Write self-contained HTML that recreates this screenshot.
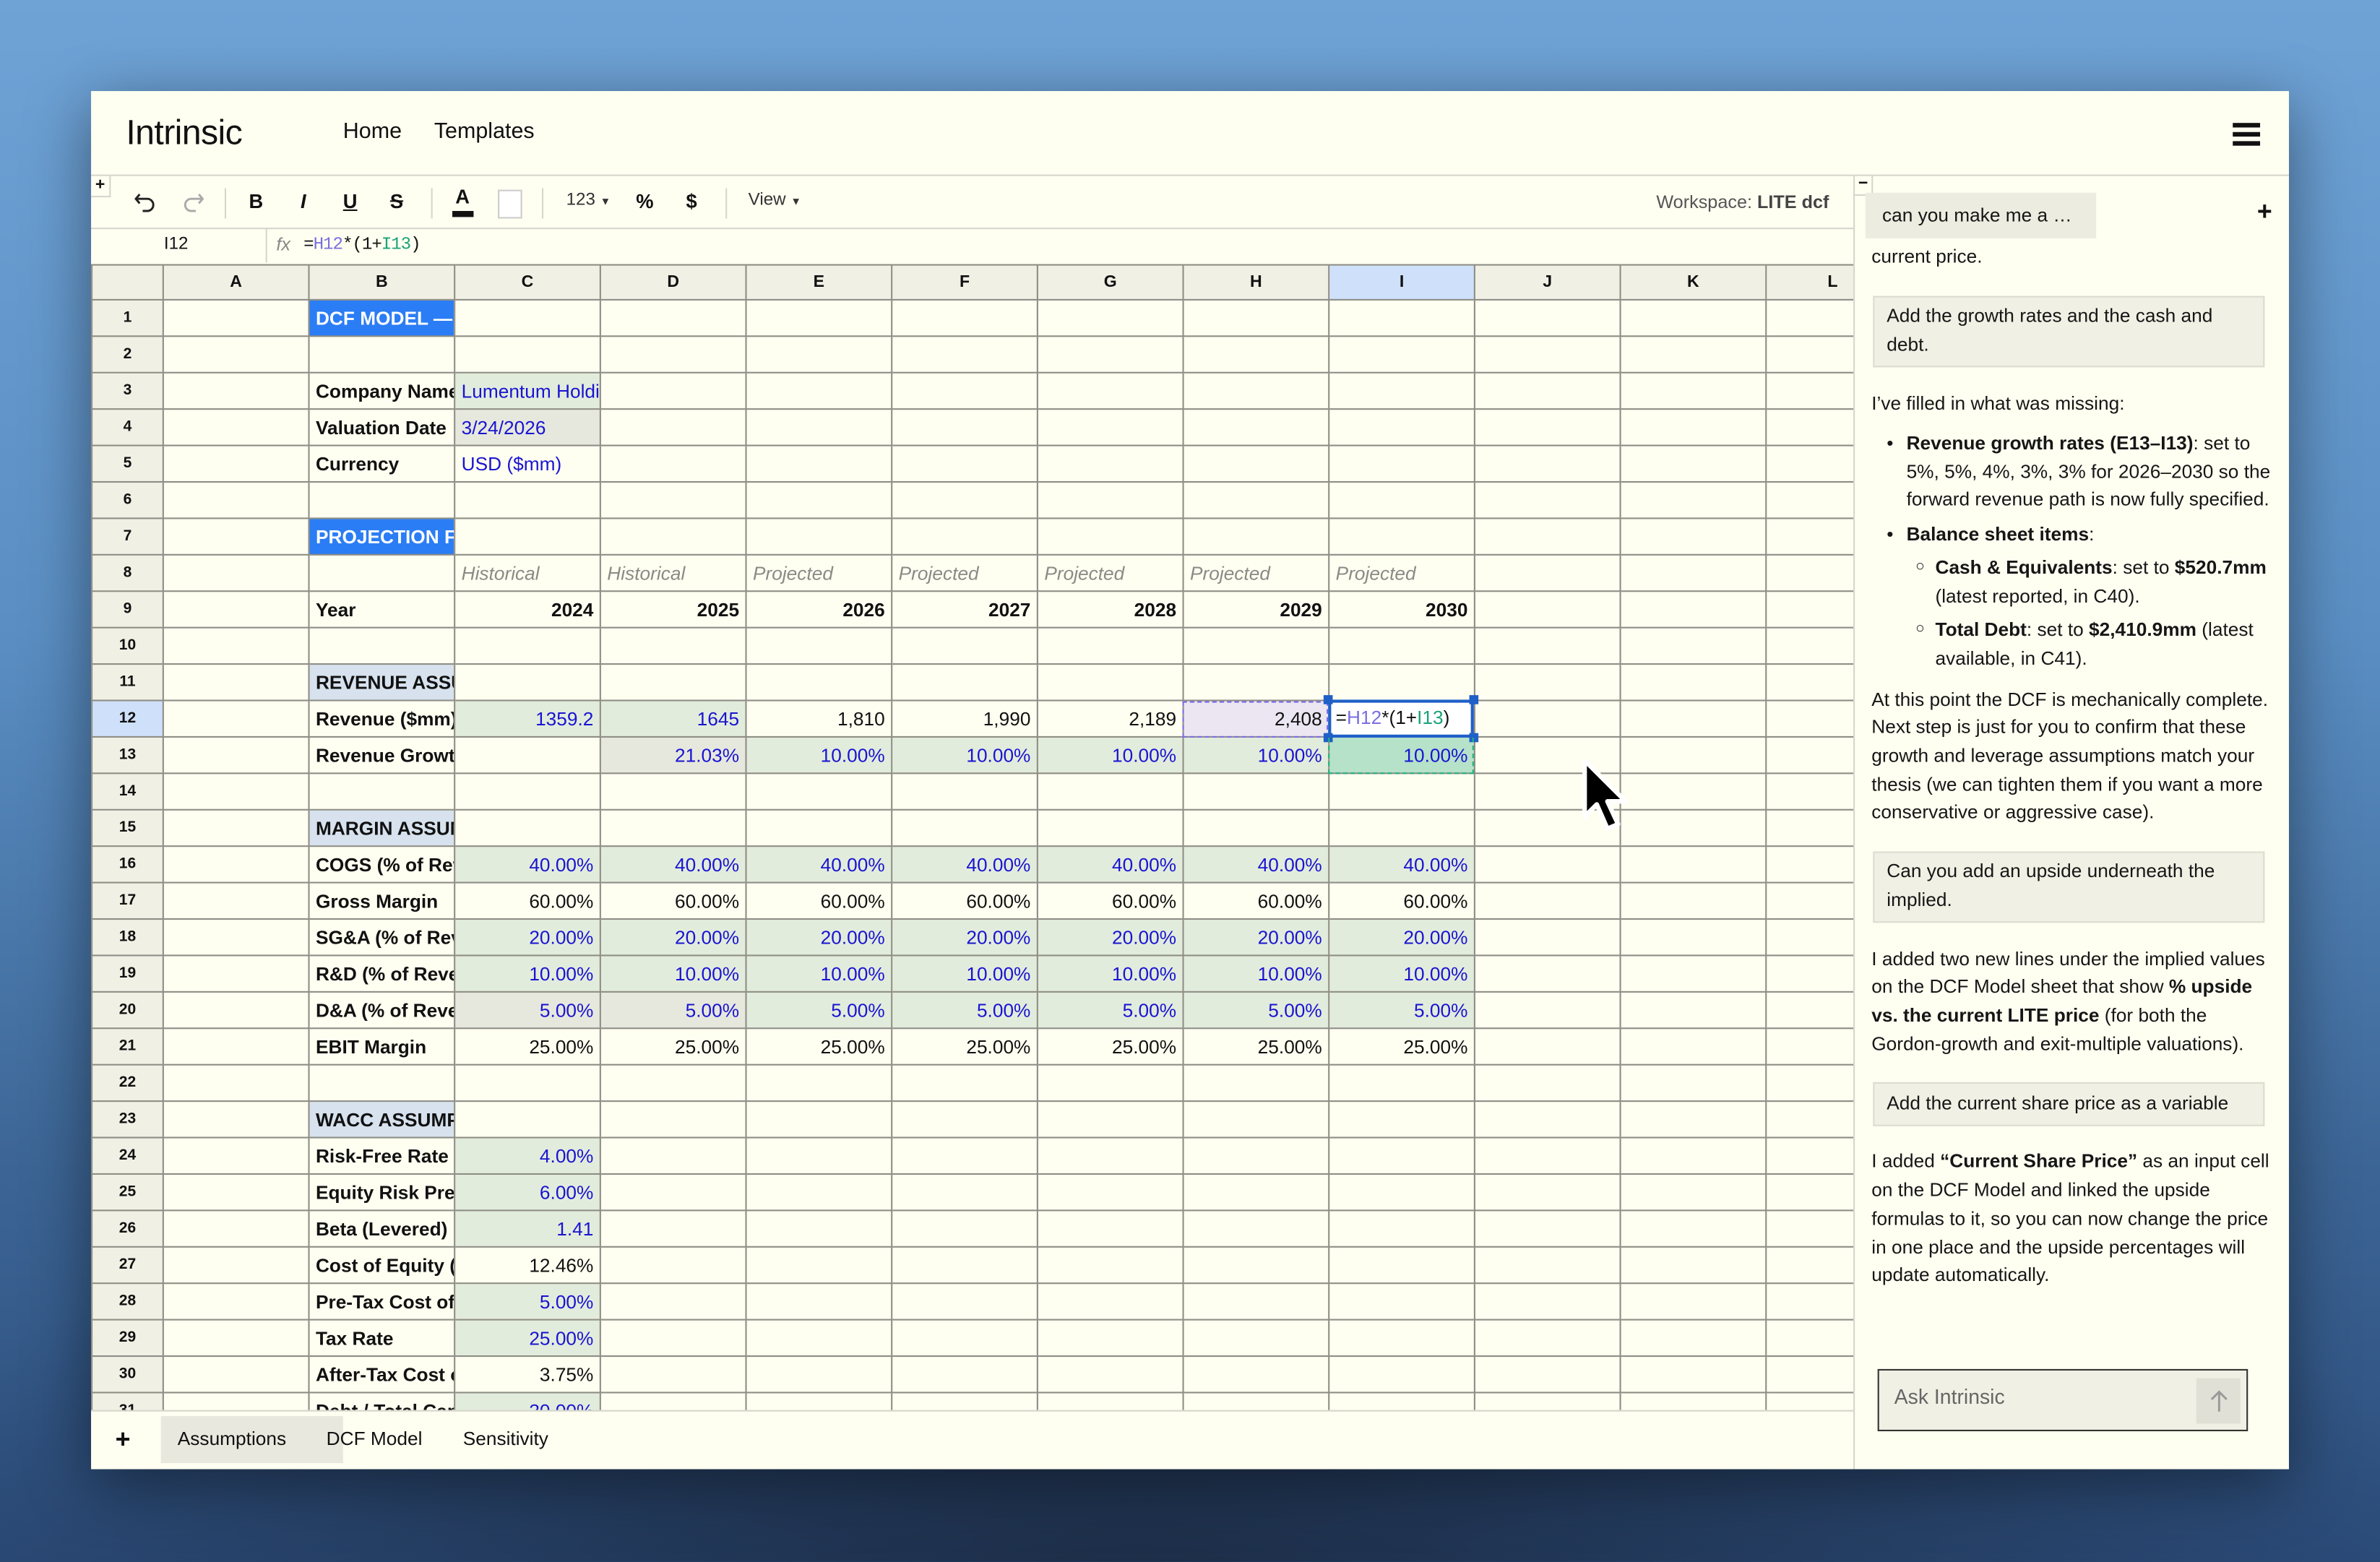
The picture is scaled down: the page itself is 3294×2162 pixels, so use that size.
<!DOCTYPE html>
<html><head><meta charset="utf-8">
<style>
html,body{margin:0;padding:0;width:3294px;height:2160px;overflow:hidden;}
body{background:#2a4a72;}
#root{position:absolute;left:0;top:0;width:1568px;height:1029px;transform:scale(2.10077);transform-origin:0 0;
 background:
  radial-gradient(ellipse 900px 300px at 750px 1050px, #1c2c45 0%, rgba(28,44,69,0) 100%),
  linear-gradient(180deg,#6fa3d6 0%,#5b8fc4 40%,#3c6595 75%,#2c4d7c 100%);
 font-family:"Liberation Sans",Arial,sans-serif;color:#111;overflow:hidden;}
#win{position:absolute;left:60px;top:60px;width:1448px;height:908px;background:#fefff1;box-shadow:0 10px 40px rgba(0,0,0,.45);overflow:hidden;}
.a{position:absolute;white-space:nowrap;}
.hl{position:absolute;background:#d6d6cc;}
table{border-collapse:collapse;table-layout:fixed;position:absolute;left:0;top:114px;width:1199px;}
tr{height:24px;}
td{border:1px solid #8e8e86;height:24px;padding:0 4px;font-size:12.5px;white-space:nowrap;overflow:hidden;box-sizing:border-box;line-height:22px;}
tr.h{height:23px;}
tr.h td{background:#f1f0e5;font-weight:bold;font-size:11px;text-align:center;height:23px;}
td.rh{background:#f1f0e5;font-weight:bold;font-size:10px;text-align:center;padding:0;}
.b{font-weight:bold;}
.r{text-align:right;}
.bl{color:#1a14d2;}
.g{background:#e2ecdc;}
.gy{background:#e6e8dd;}
.hd{background:#2b7df5;color:#fff;font-weight:bold;}
.sc{background:#d7e2ee;font-weight:bold;}
.it{font-style:italic;color:#8a8a86;}
.chat{font-size:12.5px;line-height:18px;color:#161616;}
.box{position:absolute;background:#f0f0e4;border:1px solid #dcdcd0;}
</style></head><body>
<div id="root">
<div id="win">
 <div class="a" style="left:23px;top:14px;font-size:23px;letter-spacing:-0.3px;">Intrinsic</div>
 <div class="a" style="left:166px;top:19px;font-size:14.5px;">Home</div>
 <div class="a" style="left:226px;top:19px;font-size:14.5px;">Templates</div>
 <div class="a" style="left:1411px;top:21px;width:18px;height:3px;background:#111;box-shadow:0 6px 0 #111,0 12px 0 #111;"></div>
 <div class="hl" style="left:0;top:55px;width:1448px;height:1px;"></div>
 <div class="a" style="left:0;top:56px;width:12px;height:13px;border:1px solid #d6d6cc;border-left:none;border-top:none;font-size:11px;font-weight:bold;text-align:center;line-height:12px;">+</div>
 <svg class="a" style="left:28px;top:66px" width="16" height="14" viewBox="0 0 16 14"><path d="M4 2 L1.5 5 L4 8 M1.5 5 H9 A4 4 0 0 1 9 13 H6" fill="none" stroke="#222" stroke-width="1.4"/></svg>
 <svg class="a" style="left:59px;top:66px" width="16" height="14" viewBox="0 0 16 14"><path d="M12 2 L14.5 5 L12 8 M14.5 5 H7 A4 4 0 0 0 7 13 H10" fill="none" stroke="#aaa" stroke-width="1.4"/></svg>
 <div class="hl" style="left:88px;top:64px;width:1px;height:20px;"></div>
 <div class="a b" style="left:104px;top:65px;font-size:13px;">B</div>
 <div class="a" style="left:138px;top:65px;font-size:13px;font-style:italic;font-weight:bold;">I</div>
 <div class="a" style="left:166px;top:65px;font-size:13px;font-weight:bold;text-decoration:underline;">U</div>
 <div class="a" style="left:197px;top:65px;font-size:13px;font-weight:bold;text-decoration:line-through;">S</div>
 <div class="hl" style="left:224px;top:64px;width:1px;height:20px;"></div>
 <div class="a b" style="left:240px;top:62px;font-size:13px;">A</div>
 <div class="a" style="left:238px;top:79px;width:14px;height:4px;background:#111;"></div>
 <div class="a" style="left:268px;top:65px;width:14px;height:17px;border:1px solid #ccc;background:#fff;"></div>
 <div class="hl" style="left:297px;top:64px;width:1px;height:20px;"></div>
 <div class="a" style="left:313px;top:66px;font-size:11.5px;color:#333;">123 <span style="font-size:7px">▼</span></div>
 <div class="a b" style="left:359px;top:65px;font-size:13px;">%</div>
 <div class="a b" style="left:392px;top:65px;font-size:13px;">$</div>
 <div class="hl" style="left:418px;top:64px;width:1px;height:20px;"></div>
 <div class="a" style="left:433px;top:66px;font-size:11.5px;color:#333;">View <span style="font-size:7px">▼</span></div>
 <div class="a" style="right:303px;top:66px;font-size:12px;color:#555;">Workspace: <b style="color:#444">LITE dcf</b></div>
 <div class="hl" style="left:0;top:90px;width:1161px;height:1px;"></div>
 <div class="a" style="left:48px;top:95px;font-size:11.5px;">I12</div>
 <div class="hl" style="left:115px;top:90px;width:1px;height:23px;"></div>
 <div class="a" style="left:122px;top:94px;font-size:12px;font-style:italic;color:#888;">fx</div>
 <div class="a" style="left:140px;top:95px;font-size:11.5px;font-family:'Liberation Mono',monospace;letter-spacing:-0.5px;">=<span style="color:#7a6fe0">H12</span>*(1+<span style="color:#1aa37a">I13</span>)</div>
 <div class="a" style="left:0;top:0;width:1161px;height:869px;overflow:hidden;">
 <table>
 <colgroup><col style="width:47px"><col style="width:96px"><col style="width:96px"><col style="width:96px"><col style="width:96px"><col style="width:96px"><col style="width:96px"><col style="width:96px"><col style="width:96px"><col style="width:96px"><col style="width:96px"><col style="width:96px"><col style="width:96px"></colgroup>
 <tr class="h"><td></td><td>A</td><td>B</td><td>C</td><td>D</td><td>E</td><td>F</td><td>G</td><td>H</td><td style="background:#cfe0fa">I</td><td>J</td><td>K</td><td style="text-align:left;padding-left:40px">L</td></tr>
 <tr><td class="rh">1</td><td></td><td class="hd">DCF MODEL —</td><td></td><td></td><td></td><td></td><td></td><td></td><td></td><td></td><td></td><td></td></tr>
 <tr><td class="rh">2</td><td></td><td></td><td></td><td></td><td></td><td></td><td></td><td></td><td></td><td></td><td></td><td></td></tr>
 <tr><td class="rh">3</td><td></td><td class="b">Company Name</td><td class="g bl">Lumentum Holdings</td><td></td><td></td><td></td><td></td><td></td><td></td><td></td><td></td><td></td></tr>
 <tr><td class="rh">4</td><td></td><td class="b">Valuation Date</td><td class="gy bl">3/24/2026</td><td></td><td></td><td></td><td></td><td></td><td></td><td></td><td></td><td></td></tr>
 <tr><td class="rh">5</td><td></td><td class="b">Currency</td><td class="bl">USD ($mm)</td><td></td><td></td><td></td><td></td><td></td><td></td><td></td><td></td><td></td></tr>
 <tr><td class="rh">6</td><td></td><td></td><td></td><td></td><td></td><td></td><td></td><td></td><td></td><td></td><td></td><td></td></tr>
 <tr><td class="rh">7</td><td></td><td class="hd">PROJECTION FRAMEWORK</td><td></td><td></td><td></td><td></td><td></td><td></td><td></td><td></td><td></td><td></td></tr>
 <tr><td class="rh">8</td><td></td><td></td><td class="it">Historical</td><td class="it">Historical</td><td class="it">Projected</td><td class="it">Projected</td><td class="it">Projected</td><td class="it">Projected</td><td class="it">Projected</td><td></td><td></td><td></td></tr>
 <tr><td class="rh">9</td><td></td><td class="b">Year</td><td class="b r">2024</td><td class="b r">2025</td><td class="b r">2026</td><td class="b r">2027</td><td class="b r">2028</td><td class="b r">2029</td><td class="b r">2030</td><td></td><td></td><td></td></tr>
 <tr><td class="rh">10</td><td></td><td></td><td></td><td></td><td></td><td></td><td></td><td></td><td></td><td></td><td></td><td></td></tr>
 <tr><td class="rh">11</td><td></td><td class="sc">REVENUE ASSUMPTIONS</td><td></td><td></td><td></td><td></td><td></td><td></td><td></td><td></td><td></td><td></td></tr>
 <tr><td class="rh" style="background:#cfe0fa">12</td><td></td><td class="b">Revenue ($mm)</td><td class="g bl r">1359.2</td><td class="g bl r">1645</td><td class="r">1,810</td><td class="r">1,990</td><td class="r">2,189</td><td class="r" style="background:#ebe6f2">2,408</td><td></td><td></td><td></td><td></td></tr>
 <tr><td class="rh">13</td><td></td><td class="b">Revenue Growth</td><td></td><td class="gy bl r">21.03%</td><td class="g bl r">10.00%</td><td class="g bl r">10.00%</td><td class="g bl r">10.00%</td><td class="g bl r">10.00%</td><td class="bl r" style="background:#b5e2c9">10.00%</td><td></td><td></td><td></td></tr>
 <tr><td class="rh">14</td><td></td><td></td><td></td><td></td><td></td><td></td><td></td><td></td><td></td><td></td><td></td><td></td></tr>
 <tr><td class="rh">15</td><td></td><td class="sc">MARGIN ASSUMPTIONS</td><td></td><td></td><td></td><td></td><td></td><td></td><td></td><td></td><td></td><td></td></tr>
 <tr><td class="rh">16</td><td></td><td class="b">COGS (% of Revenue)</td><td class="g bl r">40.00%</td><td class="g bl r">40.00%</td><td class="g bl r">40.00%</td><td class="g bl r">40.00%</td><td class="g bl r">40.00%</td><td class="g bl r">40.00%</td><td class="g bl r">40.00%</td><td></td><td></td><td></td></tr>
 <tr><td class="rh">17</td><td></td><td class="b">Gross Margin</td><td class="r">60.00%</td><td class="r">60.00%</td><td class="r">60.00%</td><td class="r">60.00%</td><td class="r">60.00%</td><td class="r">60.00%</td><td class="r">60.00%</td><td></td><td></td><td></td></tr>
 <tr><td class="rh">18</td><td></td><td class="b">SG&amp;A (% of Revenue)</td><td class="g bl r">20.00%</td><td class="g bl r">20.00%</td><td class="g bl r">20.00%</td><td class="g bl r">20.00%</td><td class="g bl r">20.00%</td><td class="g bl r">20.00%</td><td class="g bl r">20.00%</td><td></td><td></td><td></td></tr>
 <tr><td class="rh">19</td><td></td><td class="b">R&amp;D (% of Revenue)</td><td class="g bl r">10.00%</td><td class="g bl r">10.00%</td><td class="g bl r">10.00%</td><td class="g bl r">10.00%</td><td class="g bl r">10.00%</td><td class="g bl r">10.00%</td><td class="g bl r">10.00%</td><td></td><td></td><td></td></tr>
 <tr><td class="rh">20</td><td></td><td class="b">D&amp;A (% of Revenue)</td><td class="gy bl r">5.00%</td><td class="gy bl r">5.00%</td><td class="g bl r">5.00%</td><td class="g bl r">5.00%</td><td class="g bl r">5.00%</td><td class="g bl r">5.00%</td><td class="g bl r">5.00%</td><td></td><td></td><td></td></tr>
 <tr><td class="rh">21</td><td></td><td class="b">EBIT Margin</td><td class="r">25.00%</td><td class="r">25.00%</td><td class="r">25.00%</td><td class="r">25.00%</td><td class="r">25.00%</td><td class="r">25.00%</td><td class="r">25.00%</td><td></td><td></td><td></td></tr>
 <tr><td class="rh">22</td><td></td><td></td><td></td><td></td><td></td><td></td><td></td><td></td><td></td><td></td><td></td><td></td></tr>
 <tr><td class="rh">23</td><td></td><td class="sc">WACC ASSUMPTIONS</td><td></td><td></td><td></td><td></td><td></td><td></td><td></td><td></td><td></td><td></td></tr>
 <tr><td class="rh">24</td><td></td><td class="b">Risk-Free Rate</td><td class="g bl r">4.00%</td><td></td><td></td><td></td><td></td><td></td><td></td><td></td><td></td><td></td></tr>
 <tr><td class="rh">25</td><td></td><td class="b">Equity Risk Premium</td><td class="g bl r">6.00%</td><td></td><td></td><td></td><td></td><td></td><td></td><td></td><td></td><td></td></tr>
 <tr><td class="rh">26</td><td></td><td class="b">Beta (Levered)</td><td class="g bl r">1.41</td><td></td><td></td><td></td><td></td><td></td><td></td><td></td><td></td><td></td></tr>
 <tr><td class="rh">27</td><td></td><td class="b">Cost of Equity (CAPM)</td><td class="r">12.46%</td><td></td><td></td><td></td><td></td><td></td><td></td><td></td><td></td><td></td></tr>
 <tr><td class="rh">28</td><td></td><td class="b">Pre-Tax Cost of Debt</td><td class="g bl r">5.00%</td><td></td><td></td><td></td><td></td><td></td><td></td><td></td><td></td><td></td></tr>
 <tr><td class="rh">29</td><td></td><td class="b">Tax Rate</td><td class="g bl r">25.00%</td><td></td><td></td><td></td><td></td><td></td><td></td><td></td><td></td><td></td></tr>
 <tr><td class="rh">30</td><td></td><td class="b">After-Tax Cost of Debt</td><td class="r">3.75%</td><td></td><td></td><td></td><td></td><td></td><td></td><td></td><td></td><td></td></tr>
 <tr><td class="rh">31</td><td></td><td class="b">Debt / Total Capital</td><td class="g bl r">30.00%</td><td></td><td></td><td></td><td></td><td></td><td></td><td></td><td></td><td></td></tr>
 </table>
 <div class="a" style="left:719px;top:402px;width:96px;height:24px;border:1.5px dashed #7b6ee6;box-sizing:border-box;"></div>
 <div class="a" style="left:815px;top:401px;width:96px;height:25px;border:2px solid #1f5fc8;background:#fff;font-size:12.5px;line-height:21px;padding-left:3px;box-sizing:border-box;">=<span style="color:#7a6fe0">H12</span>*(1+<span style="color:#1aa37a">I13</span>)</div>
 <div class="a" style="left:812px;top:398px;width:6px;height:6px;background:#1f5fc8"></div>
 <div class="a" style="left:908px;top:398px;width:6px;height:6px;background:#1f5fc8"></div>
 <div class="a" style="left:812px;top:423px;width:6px;height:6px;background:#1f5fc8"></div>
 <div class="a" style="left:908px;top:423px;width:6px;height:6px;background:#1f5fc8"></div>
 <div class="a" style="left:815px;top:426px;width:96px;height:24px;border:1.5px dashed #22b07e;border-top:none;box-sizing:border-box;"></div>
 </div>
 <div class="hl" style="left:0;top:869px;width:1161px;height:1px;"></div>
 <div class="a b" style="left:16px;top:879px;font-size:17px;">+</div>
 <div class="a" style="left:46px;top:873px;width:120px;height:31px;background:#e8e8de;"></div>
 <div class="a" style="left:57px;top:881px;font-size:12.5px;">Assumptions</div>
 <div class="a" style="left:155px;top:881px;font-size:12.5px;">DCF Model</div>
 <div class="a" style="left:245px;top:881px;font-size:12.5px;">Sensitivity</div>
 <div class="hl" style="left:1161px;top:56px;width:1px;height:852px;"></div>
 <div class="a" style="left:1162px;top:56px;width:11px;height:12px;border:1px solid #d6d6cc;border-left:none;border-top:none;font-size:11px;font-weight:bold;text-align:center;line-height:10px;">−</div>
 <div class="a" style="left:1169px;top:67px;width:152px;height:30px;background:#ecece0;"></div>
 <div class="a chat" style="left:1180px;top:73px;">can you make me a …</div>
 <div class="a b" style="left:1427px;top:70px;font-size:17px;">+</div>
 <div class="a chat" style="left:1173px;top:100px;">current price.</div>
 <div class="box" style="left:1174px;top:135px;width:256px;height:45px;"></div>
 <div class="a chat" style="left:1183px;top:139px;">Add the growth rates and the cash and</div>
 <div class="a chat" style="left:1183px;top:158px;">debt.</div>
 <div class="a chat" style="left:1173px;top:197px;">I’ve filled in what was missing:</div>
 <div class="a chat" style="left:1183px;top:223px;">•</div>
 <div class="a chat" style="left:1196px;top:223px;"><b>Revenue growth rates (E13–I13)</b>: set to</div>
 <div class="a chat" style="left:1196px;top:242px;">5%, 5%, 4%, 3%, 3% for 2026–2030 so the</div>
 <div class="a chat" style="left:1196px;top:260px;">forward revenue path is now fully specified.</div>
 <div class="a chat" style="left:1183px;top:283px;">•</div>
 <div class="a chat" style="left:1196px;top:283px;"><b>Balance sheet items</b>:</div>
 <div class="a chat" style="left:1202px;top:305px;font-size:10px;">○</div>
 <div class="a chat" style="left:1215px;top:305px;"><b>Cash &amp; Equivalents</b>: set to <b>$520.7mm</b></div>
 <div class="a chat" style="left:1215px;top:324px;">(latest reported, in C40).</div>
 <div class="a chat" style="left:1202px;top:346px;font-size:10px;">○</div>
 <div class="a chat" style="left:1215px;top:346px;"><b>Total Debt</b>: set to <b>$2,410.9mm</b> (latest</div>
 <div class="a chat" style="left:1215px;top:365px;">available, in C41).</div>
 <div class="a chat" style="left:1173px;top:392px;">At this point the DCF is mechanically complete.</div>
 <div class="a chat" style="left:1173px;top:410px;">Next step is just for you to confirm that these</div>
 <div class="a chat" style="left:1173px;top:429px;">growth and leverage assumptions match your</div>
 <div class="a chat" style="left:1173px;top:448px;">thesis (we can tighten them if you want a more</div>
 <div class="a chat" style="left:1173px;top:466px;">conservative or aggressive case).</div>
 <div class="box" style="left:1174px;top:501px;width:256px;height:45px;"></div>
 <div class="a chat" style="left:1183px;top:505px;">Can you add an upside underneath the</div>
 <div class="a chat" style="left:1183px;top:524px;">implied.</div>
 <div class="a chat" style="left:1173px;top:563px;">I added two new lines under the implied values</div>
 <div class="a chat" style="left:1173px;top:581px;">on the DCF Model sheet that show <b>% upside</b></div>
 <div class="a chat" style="left:1173px;top:600px;"><b>vs. the current LITE price</b> (for both the</div>
 <div class="a chat" style="left:1173px;top:619px;">Gordon-growth and exit-multiple valuations).</div>
 <div class="box" style="left:1174px;top:653px;width:256px;height:27px;"></div>
 <div class="a chat" style="left:1183px;top:658px;">Add the current share price as a variable</div>
 <div class="a chat" style="left:1173px;top:696px;">I added <b>“Current Share Price”</b> as an input cell</div>
 <div class="a chat" style="left:1173px;top:715px;">on the DCF Model and linked the upside</div>
 <div class="a chat" style="left:1173px;top:734px;">formulas to it, so you can now change the price</div>
 <div class="a chat" style="left:1173px;top:753px;">in one place and the upside percentages will</div>
 <div class="a chat" style="left:1173px;top:771px;">update automatically.</div>
 <div class="a" style="left:1177px;top:842px;width:242px;height:39px;border:1.3px solid #333;background:#f0f0e4;"></div>
 <div class="a" style="left:1188px;top:853px;font-size:13.5px;color:#666;">Ask Intrinsic</div>
 <div class="a" style="left:1387px;top:848px;width:29px;height:30px;background:#e0e0d6;"></div>
 <svg class="a" style="left:1394px;top:855px" width="16" height="16" viewBox="0 0 16 16"><path d="M8 15 V2 M3 7 L8 2 L13 7" fill="none" stroke="#999" stroke-width="1.4"/></svg>
</div>
<svg class="a" style="left:1038px;top:498px" width="40" height="58" viewBox="0 0 40 58"><path d="M6 3 L6 40 L14 32 L21 48 L28 45 L21 30 L33 30 Z" fill="#000" stroke="#fff" stroke-width="3" stroke-linejoin="round"/></svg>
</div>
</body></html>
